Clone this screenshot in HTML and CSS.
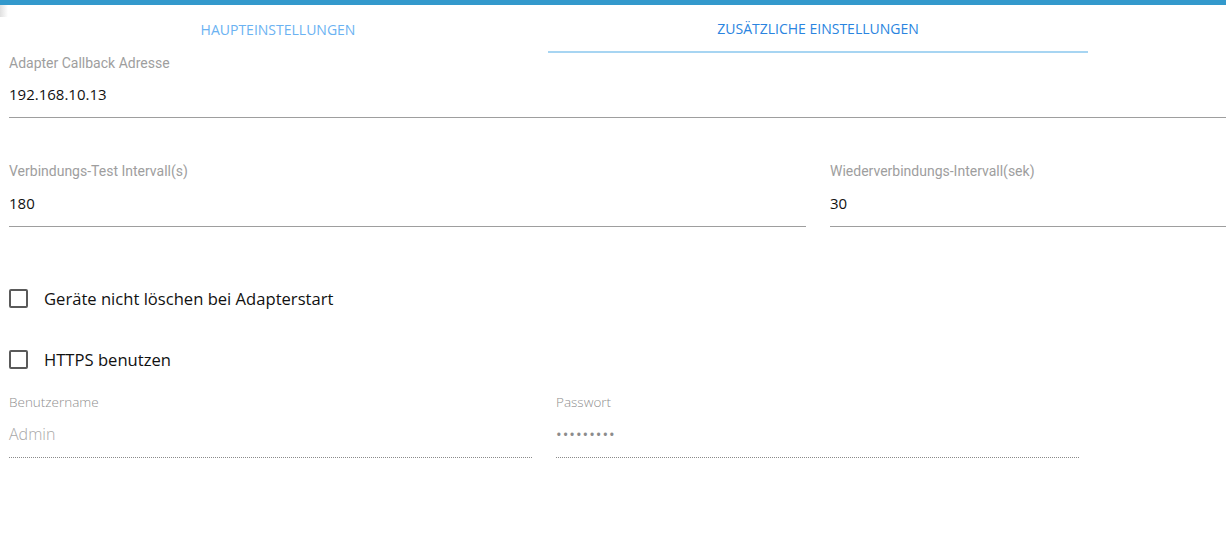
FILE: index.html
```html
<!DOCTYPE html>
<html lang="de">
<head>
<meta charset="utf-8">
<link rel="stylesheet" href="styles.css">
</head>
<body>
<div class="topbar"></div>
<div class="shade"></div>
<div class="tabs">
  <div class="tab">HAUPTEINSTELLUNGEN</div>
  <div class="tab active">ZUSÄTZLICHE EINSTELLUNGEN</div>
</div>
<div class="form">
  <div class="field full">
    <div class="label">Adapter Callback Adresse</div>
    <div class="value">192.168.10.13</div>
  </div>
  <div class="row two">
    <div class="field wide">
      <div class="label">Verbindungs-Test Intervall(s)</div>
      <div class="value">180</div>
    </div>
    <div class="field grow">
      <div class="label">Wiederverbindungs-Intervall(sek)</div>
      <div class="value">30</div>
    </div>
  </div>
  <label class="check first"><span class="box"></span><span class="ctext">Geräte nicht löschen bei Adapterstart</span></label>
  <label class="check second"><span class="box"></span><span class="ctext">HTTPS benutzen</span></label>
  <div class="row three">
    <div class="field half dotted">
      <div class="label small">Benutzername</div>
      <div class="value muted">Admin</div>
    </div>
    <div class="field half dotted">
      <div class="label small">Passwort</div>
      <div class="value dots">•••••••••</div>
    </div>
  </div>
</div>
</body>
</html>
```

FILE: styles.css
```css
html, body {
  margin: 0;
  padding: 0;
  background: #fff;
  overflow: hidden;
}
body {
  width: 1226px;
  height: 546px;
  position: relative;
  font-family: "Open Sans", "Noto Sans", sans-serif;
}
.topbar {
  height: 5px;
  background: #3399cc;
}
.shade {
  position: absolute;
  left: 0;
  top: 5px;
  width: 8px;
  height: 12px;
  background: linear-gradient(to right, #e0e0e0, #fff);
}
.tabs {
  display: flex;
  margin-left: 8px;
  width: 1080px;
  height: 48px;
}
.tab {
  width: 540px;
  box-sizing: border-box;
  text-align: center;
  font-size: 14px;
  line-height: 49px;
  color: #6bb2f2;
}
.tab.active {
  color: #2a84e0;
  border-bottom: 2px solid #a7d5f2;
  line-height: 47px;
}
.form {
  margin-left: 9px;
  display: flex;
  flex-direction: column;
}
.field {
  border-bottom: 1px solid #9e9e9e;
  box-sizing: border-box;
}
.label {
  font-family: Roboto, "Noto Sans", sans-serif;
  font-size: 14px;
  color: #9e9e9e;
  line-height: 16px;
}
.value {
  font-size: 15px;
  color: #111;
  line-height: 20px;
}
.full {
  padding-top: 2px;
  height: 65px;
}
.full .value {
  margin-top: 13px;
}
.row {
  display: flex;
  gap: 24px;
}
.two {
  margin-top: 45px;
}
.two .field {
  height: 64px;
}
.two .value {
  margin-top: 14px;
}
.wide {
  width: 797px;
}
.grow {
  flex: 1;
}
.check {
  display: flex;
  align-items: center;
  gap: 17px;
  height: 20px;
}
.check.first {
  margin-top: 61px;
}
.check.second {
  margin-top: 41px;
}
.box {
  width: 19px;
  height: 19px;
  box-sizing: border-box;
  border: 2px solid #5a5a5a;
  border-radius: 2px;
}
.ctext {
  font-size: 16.6px;
  color: #111;
  margin-left: -1px;
}
.three {
  margin-top: 25px;
}
.half {
  width: 523px;
  height: 64px;
}
.dotted {
  border-bottom: 1px dotted #8a8a8a;
}
.label.small {
  font-family: "Open Sans", sans-serif;
  font-weight: 300;
  font-size: 13.5px;
  color: #8f8f8f;
}
.value.muted {
  color: #a8a8a8;
  font-weight: 300;
  font-size: 16px;
  margin-top: 14px;
}
.value.dots {
  color: #8c8c8c;
  font-size: 15px;
  letter-spacing: 1px;
  margin-top: 14px;
}
```
